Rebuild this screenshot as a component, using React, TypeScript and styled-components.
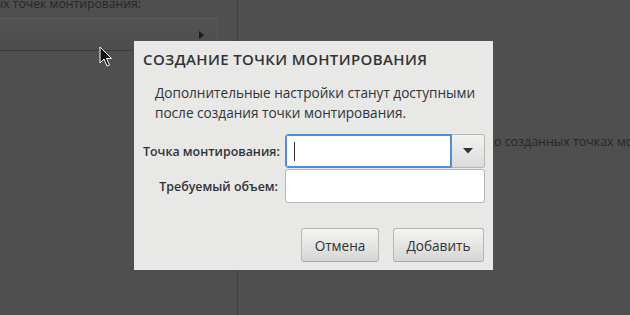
import React from "react";
import styled, { createGlobalStyle } from "styled-components";

const Global = createGlobalStyle`
  html, body { margin: 0; padding: 0; }
  body {
    width: 630px; height: 315px; overflow: hidden;
    background: #4f4f4f;
    font-family: "Open Sans", "Noto Sans", sans-serif;
  }
`;

const Screen = styled.div`
  position: relative;
  width: 630px;
  height: 315px;
  display: flex;
  overflow: hidden;
  background: #4f4f4f;
`;

const LeftPanel = styled.div`
  width: 237px;
  flex: none;
  border-right: 1px solid #3f3f3f;
  display: flex;
  flex-direction: column;
  overflow: hidden;
`;

const SectionLabel = styled.div`
  margin-top: -6px;
  height: 20px;
  width: 141px;
  display: flex;
  justify-content: flex-end;
  overflow: hidden;
  white-space: nowrap;
  font-size: 12.2px;
  line-height: 20px;
  color: #262626;
`;

const MountRow = styled.div`
  margin-top: 4px;
  margin-left: -4px;
  width: 222px;
  height: 33px;
  box-sizing: border-box;
  border: 1px solid #5d5d5d;
  border-right-color: #585858;
  border-bottom-color: #3c3c3c;
  border-radius: 0 3px 3px 0;
  background: linear-gradient(#535353, #4d4d4d);
  display: flex;
  align-items: center;
  justify-content: flex-end;
  padding-right: 13px;
`;

const RightPanel = styled.div`
  flex: 1;
  min-width: 0;
  overflow: hidden;
`;

const InfoText = styled.div`
  margin-top: 132px;
  display: flex;
  white-space: nowrap;
  font-size: 12.4px;
  line-height: 20px;
  color: #262626;
`;

const HiddenPart = styled.span`
  width: 256px;
  flex: none;
  display: flex;
  justify-content: flex-end;
  overflow: hidden;
`;

const VisiblePart = styled.span`
  flex: none;
`;

const Dialog = styled.div`
  position: absolute;
  left: 134px;
  top: 41px;
  width: 359px;
  height: 229px;
  box-sizing: border-box;
  background: #e8e8e7;
  padding: 8px 9px 8px 9px;
  display: flex;
  flex-direction: column;
  color: #2e3436;
`;

const Title = styled.h1`
  margin: 0;
  font-size: 15px;
  font-weight: 600;
  line-height: 20px;
  letter-spacing: 0.38px;
  color: #2e3436;
`;

const Description = styled.p`
  margin: 14px 0 0 12px;
  font-size: 13.6px;
  line-height: 20px;
  white-space: nowrap;
  color: #2e3436;
`;

const FormGrid = styled.div`
  margin-top: 11px;
  display: grid;
  grid-template-columns: 135px 200px;
  column-gap: 7px;
  row-gap: 1px;
  align-items: center;
`;

const FieldLabel = styled.label`
  font-size: 12.4px;
  font-weight: 600;
  text-align: right;
  color: #2e3436;
  white-space: nowrap;
`;

const Combo = styled.div`
  display: flex;
  height: 34px;
`;

const Entry = styled.div<{ $focused?: boolean }>`
  box-sizing: border-box;
  height: 34px;
  flex: 1;
  background: #ffffff;
  border: 1px solid ${(p) => (p.$focused ? "#4a90d9" : "#b6b6b3")};
  box-shadow: ${(p) => (p.$focused ? "inset 0 0 0 1px #4a90d9" : "none")};
  border-radius: ${(p) => (p.$focused ? "3px 0 0 3px" : "3px")};
  display: flex;
  align-items: center;
  padding-left: 8px;
`;

const Caret = styled.span`
  width: 1px;
  height: 19px;
  background: #2e3436;
`;

const DropButton = styled.div`
  box-sizing: border-box;
  width: 33px;
  height: 34px;
  border: 1px solid #b6b6b3;
  border-left: none;
  border-radius: 0 3px 3px 0;
  background: linear-gradient(#f2f2f1, #dcdcda);
  display: flex;
  align-items: center;
  justify-content: center;
`;

const ButtonRow = styled.div`
  margin-top: auto;
  display: flex;
  justify-content: flex-end;
  gap: 14px;
`;

const Button = styled.button<{ $w: number }>`
  width: ${(p) => p.$w}px;
  height: 34px;
  box-sizing: border-box;
  border: 1px solid #b6b6b3;
  border-bottom-color: #a8a8a5;
  border-radius: 3px;
  background: linear-gradient(#f4f4f3, #d6d6d4);
  font-family: "Open Sans", "Noto Sans", sans-serif;
  font-size: 13.6px;
  color: #2e3436;
  padding: 0;
`;

const Pointer = styled.svg`
  position: absolute;
  left: 99px;
  top: 46px;
`;

export default function App() {
  return (
    <>
      <Global />
      <Screen>
        <LeftPanel>
          <SectionLabel>Сводка создаваемых точек монтирования:</SectionLabel>
          <MountRow>
            <svg width="5" height="8" viewBox="0 0 5 8">
              <path d="M0 0 L5 4 L0 8 Z" fill="#1c1c1c" />
            </svg>
          </MountRow>
        </LeftPanel>
        <RightPanel>
          <InfoText>
            <HiddenPart>Здесь будет показана информация&nbsp;</HiddenPart>
            <VisiblePart>о созданных точках монтирования</VisiblePart>
          </InfoText>
        </RightPanel>
        <Dialog>
          <Title>СОЗДАНИЕ ТОЧКИ МОНТИРОВАНИЯ</Title>
          <Description>
            Дополнительные настройки станут доступными
            <br />
            после создания точки монтирования.
          </Description>
          <FormGrid>
            <FieldLabel>Точка монтирования:</FieldLabel>
            <Combo>
              <Entry $focused>
                <Caret />
              </Entry>
              <DropButton>
                <svg width="10" height="6" viewBox="0 0 10 6">
                  <path d="M0 0 L10 0 L5 5.5 Z" fill="#2e3436" />
                </svg>
              </DropButton>
            </Combo>
            <FieldLabel>Требуемый объем:</FieldLabel>
            <Entry />
          </FormGrid>
          <ButtonRow>
            <Button $w={78}>Отмена</Button>
            <Button $w={91}>Добавить</Button>
          </ButtonRow>
        </Dialog>
        <Pointer width="14" height="22" viewBox="0 0 14 22">
          <path
            d="M1 1 L1 17 L5 13 L8 20 L10.5 19 L7.5 12.5 L12.5 12.5 Z"
            fill="#111"
            stroke="#fff"
            strokeWidth="1"
            strokeLinejoin="miter"
          />
        </Pointer>
      </Screen>
    </>
  );
}
